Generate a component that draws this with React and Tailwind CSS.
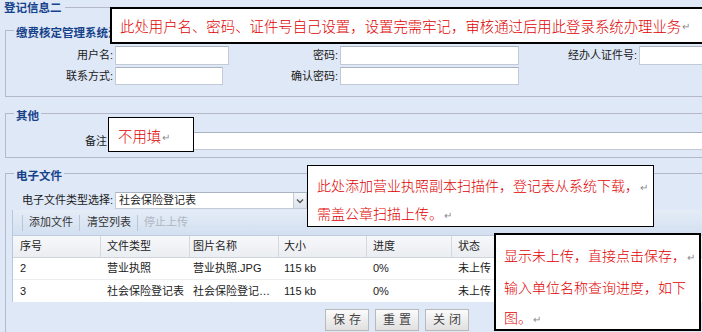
export default function App() {
  const Mark = () => <span className="text-[10px] text-[#8a8a8a] ml-[1px]">↵</span>;
  const inputCls = "h-full bg-white border border-[#c3cad6] border-t-[#aab3c2]";
  return (
    <div className="relative w-[702px] h-[332px] overflow-hidden bg-[#dfe8f6] text-[11px] text-[#1a1a1a] font-['Liberation_Sans','Noto_Sans_CJK_SC',sans-serif]">
      {/* title */}
      <div className="flex items-center h-[16px] pl-[4px]">
        <span className="font-bold text-[11.5px] text-[#15428b] leading-[14px]">登记信息二</span>
        <div className="flex-1 h-px bg-[#b5b8c8] ml-[3px] mt-[-2px]"></div>
      </div>

      {/* fieldset 1 */}
      <fieldset className="mt-[6px] ml-[5px] w-[720px] border border-[#b5b8c8] pt-[7px] pb-[11px]">
        <legend className="ml-[8px] px-[2px] pt-[5px] leading-[12px] font-bold text-[11.5px] text-[#15428b] w-[96px] overflow-hidden whitespace-nowrap">缴费核定管理系统注</legend>
        <div className="flex items-center h-[19px]">
          <span className="w-[107px] text-right">用户名:</span>
          <div className={`ml-[2px] w-[114px] ${inputCls}`}></div>
          <span className="w-[109px] text-right">密码:</span>
          <div className={`ml-[2px] w-[179px] ${inputCls}`}></div>
          <span className="w-[118px] text-right">经办人证件号:</span>
          <div className={`ml-[2px] w-[100px] ${inputCls}`}></div>
        </div>
        <div className="flex items-center h-[18px] mt-[2px]">
          <span className="w-[107px] text-right">联系方式:</span>
          <div className={`ml-[2px] w-[108px] ${inputCls}`}></div>
          <span className="w-[115px] text-right">确认密码:</span>
          <div className={`ml-[2px] w-[179px] ${inputCls}`}></div>
        </div>
      </fieldset>

      {/* fieldset 2 */}
      <fieldset className="mt-[8px] ml-[5px] w-[720px] border border-[#b5b8c8] pt-[10px] pb-[7px]">
        <legend className="ml-[8px] px-[2px] pt-[5px] leading-[12px] font-bold text-[11.5px] text-[#15428b]">其他</legend>
        <div className="flex items-center h-[18px]">
          <span className="w-[101px] text-right">备注</span>
          <div className={`ml-[5px] flex-1 ${inputCls}`}></div>
        </div>
      </fieldset>

      {/* fieldset 3 */}
      <fieldset className="mt-[7px] ml-[5px] w-[720px] border border-[#b5b8c8] pt-[10px] pb-[20px]">
        <legend className="ml-[8px] px-[2px] pt-[5px] leading-[12px] font-bold text-[11.5px] text-[#15428b]">电子文件</legend>
        <div className="flex items-center h-[17px]">
          <span className="w-[107px] text-right whitespace-nowrap">电子文件类型选择:</span>
          <div className="ml-[2px] w-[192px] h-full flex bg-white border border-[#c3cad6] border-t-[#aab3c2]">
            <span className="flex-1 pl-[3px] leading-[15px]">社会保险登记表</span>
            <div className="w-[13px] h-full flex items-center justify-center bg-linear-to-b from-[#f4f6fa] to-[#dde3ec] border-l border-[#c3cad6]">
              <svg width="8" height="6" viewBox="0 0 8 6"><path d="M1 1.5 L4 4.5 L7 1.5" fill="none" stroke="#555" strokeWidth="1.4" /></svg>
            </div>
          </div>
        </div>

        {/* grid */}
        <div className="ml-[6px] mt-[1px] border-l border-[#b7c8de]">
          <div className="h-[26px] flex items-center bg-linear-to-b from-[#e4ecf7] to-[#d3dff0] border-b border-[#c0cde0]">
            <div className="ml-[9px] w-px h-[16px] bg-[#b9c6d8]"></div>
            <span className="ml-[6px] text-[#333]">添加文件</span>
            <div className="ml-[6px] w-px h-[16px] bg-[#b9c6d8]"></div>
            <span className="ml-[7px] text-[#333]">清空列表</span>
            <div className="ml-[6px] w-px h-[16px] bg-[#b9c6d8]"></div>
            <span className="ml-[6px] text-[#aeb6c2]">停止上传</span>
          </div>
          <div className="h-[22px] flex items-center bg-linear-to-b from-[#f7f8fa] to-[#eaedf1] border-b border-[#d0d4da] text-[#222]">
            <div className="w-[87px] pl-[7px]">序号</div>
            <div className="w-[89px] pl-[6px] border-l border-[#d5d9df] h-full flex items-center">文件类型</div>
            <div className="w-[89px] pl-[3px] border-l border-[#d5d9df] h-full flex items-center">图片名称</div>
            <div className="w-[88px] pl-[5px] border-l border-[#d5d9df] h-full flex items-center">大小</div>
            <div className="w-[85px] pl-[6px] border-l border-[#d5d9df] h-full flex items-center">进度</div>
            <div className="w-[120px] pl-[6px] border-l border-[#d5d9df] h-full flex items-center">状态</div>
            <div className="flex-1 border-l border-[#d5d9df] h-full"></div>
          </div>
          <div className="h-[22px] flex items-center bg-white border-b border-[#ededed]">
            <div className="w-[87px] pl-[7px]">2</div>
            <div className="w-[89px] pl-[7px]">营业执照</div>
            <div className="w-[89px] pl-[4px]">营业执照.JPG</div>
            <div className="w-[88px] pl-[6px]">115 kb</div>
            <div className="w-[85px] pl-[7px]">0%</div>
            <div className="w-[120px] pl-[7px]">未上传</div>
          </div>
          <div className="h-[22px] flex items-center bg-white">
            <div className="w-[87px] pl-[7px]">3</div>
            <div className="w-[89px] pl-[7px]">社会保险登记表</div>
            <div className="w-[89px] pl-[4px]">社会保险登记…</div>
            <div className="w-[88px] pl-[6px]">115 kb</div>
            <div className="w-[85px] pl-[7px]">0%</div>
            <div className="w-[120px] pl-[7px]">未上传</div>
          </div>
        </div>

        {/* buttons */}
        <div className="mt-[7px] ml-[319px] flex gap-[6px]">
          {["保存", "重置", "关闭"].map((t) => (
            <div key={t} className="w-[44px] h-[22px] flex items-center justify-center bg-linear-to-b from-[#fbfbfb] to-[#e0e0e0] border border-[#b9b9b9] text-[12px] tracking-[4px] pl-[4px] text-[#444]">{t}</div>
          ))}
        </div>
      </fieldset>

      {/* annotations */}
      <div className="absolute left-[110px] top-[7px] w-[620px] h-[37px] border-2 border-black bg-white flex items-center pl-[8px] text-[14.4px] font-light text-[#e00000] whitespace-nowrap font-['Noto_Sans_CJK_SC',sans-serif]">
        <span>此处用户名、密码、证件号自己设置，设置完需牢记，审核通过后用此登录系统办理业务</span><Mark />
      </div>
      <div className="absolute left-[108px] top-[117px] w-[86px] h-[35px] border border-black bg-white flex items-center pl-[9px] pt-[3px] text-[14.4px] font-light text-[#e00000] whitespace-nowrap font-['Noto_Sans_CJK_SC',sans-serif]">
        <span>不用填</span><Mark />
      </div>
      <div className="absolute left-[307px] top-[165px] w-[347px] h-[62px] border border-black bg-white pl-[9px] pt-[6px] text-[14px] font-light leading-[27px] text-[#e00000] whitespace-nowrap font-['Noto_Sans_CJK_SC',sans-serif]">
        <div>此处添加营业执照副本扫描件，登记表从系统下载，<Mark /></div>
        <div>需盖公章扫描上传。<Mark /></div>
      </div>
      <div className="absolute left-[494px] top-[233px] w-[207px] h-[98px] border-2 border-black bg-white pl-[8px] pt-[5px] text-[14px] font-light leading-[30px] text-[#e00000] whitespace-nowrap font-['Noto_Sans_CJK_SC',sans-serif]">
        <div>显示未上传，直接点击保存，<Mark /></div>
        <div>输入单位名称查询进度，如下</div>
        <div>图。<Mark /></div>
      </div>
    </div>
  );
}
